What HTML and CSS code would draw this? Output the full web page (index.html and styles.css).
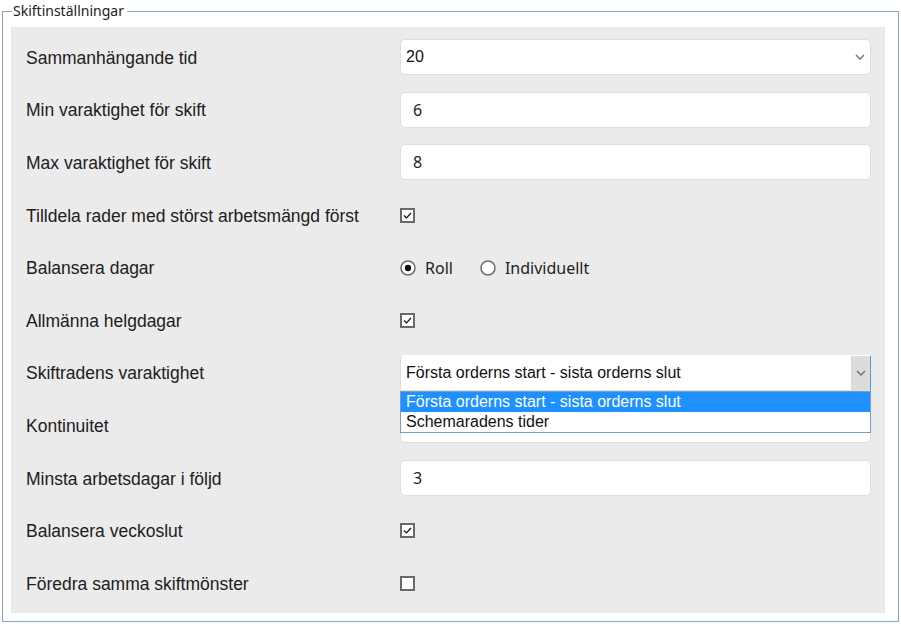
FILE: index.html
```html
<!DOCTYPE html>
<html lang="sv">
<head>
    <meta charset="UTF-8">
    <meta name="viewport" content="width=device-width, initial-scale=1.0">
    <title>Skiftinställningar</title>
    <link rel="stylesheet" href="styles.css">
</head>
<body>
    <fieldset class="settings">
        <legend>Skiftinställningar</legend>

        <div class="panel">
            <label class="row-label" for="contiguous">Sammanhängande tid</label>
            <div class="control">
                <div class="select">
                    <span class="select-value">20</span>
                    <svg class="chevron" width="10" height="6" viewBox="0 0 10 6"><path d="M1 1l4 4 4-4" fill="none" stroke="#6f6f6f" stroke-width="1.4"/></svg>
                </div>
            </div>

            <label class="row-label" for="minShift">Min varaktighet för skift</label>
            <div class="control"><input class="text-input" id="minShift" type="text" value="6"></div>

            <label class="row-label" for="maxShift">Max varaktighet för skift</label>
            <div class="control"><input class="text-input" id="maxShift" type="text" value="8"></div>

            <span class="row-label">Tilldela rader med störst arbetsmängd först</span>
            <div class="control">
                <svg class="check" width="15" height="15" viewBox="0 0 15 15"><rect x="1" y="1" width="13" height="13" fill="#fff" stroke="#6a6a6a" stroke-width="2"/><path d="M4 7.5l2.5 2.5 4.5-5" fill="none" stroke="#111" stroke-width="1.2"/></svg>
            </div>

            <span class="row-label">Balansera dagar</span>
            <div class="control radios">
                <span class="radio-item">
                    <svg class="radio" width="16" height="16" viewBox="0 0 16 16"><circle cx="8" cy="8" r="7" fill="#fff" stroke="#6a6a6a" stroke-width="1.5"/><circle cx="8" cy="8" r="3.2" fill="#111"/></svg>
                    Roll
                </span>
                <span class="radio-item">
                    <svg class="radio" width="16" height="16" viewBox="0 0 16 16"><circle cx="8" cy="8" r="7" fill="#fff" stroke="#6a6a6a" stroke-width="1.5"/></svg>
                    Individuellt
                </span>
            </div>

            <span class="row-label">Allmänna helgdagar</span>
            <div class="control">
                <svg class="check" width="15" height="15" viewBox="0 0 15 15"><rect x="1" y="1" width="13" height="13" fill="#fff" stroke="#6a6a6a" stroke-width="2"/><path d="M4 7.5l2.5 2.5 4.5-5" fill="none" stroke="#111" stroke-width="1.2"/></svg>
            </div>

            <span class="row-label">Skiftradens varaktighet</span>
            <div class="control">
                <div class="select is-open">
                    <span class="select-value">Första orderns start - sista orderns slut</span>
                    <span class="select-button">
                        <svg class="chevron" width="10" height="6" viewBox="0 0 10 6"><path d="M1 1l4 4 4-4" fill="none" stroke="#6f6f6f" stroke-width="1.4"/></svg>
                    </span>
                    <ul class="options">
                        <li class="option selected">Första orderns start - sista orderns slut</li>
                        <li class="option">Schemaradens tider</li>
                    </ul>
                </div>
            </div>

            <label class="row-label" for="continuity">Kontinuitet</label>
            <div class="control"><input class="text-input" id="continuity" type="text" value=""></div>

            <label class="row-label" for="minDays">Minsta arbetsdagar i följd</label>
            <div class="control"><input class="text-input" id="minDays" type="text" value="3"></div>

            <span class="row-label">Balansera veckoslut</span>
            <div class="control">
                <svg class="check" width="15" height="15" viewBox="0 0 15 15"><rect x="1" y="1" width="13" height="13" fill="#fff" stroke="#6a6a6a" stroke-width="2"/><path d="M4 7.5l2.5 2.5 4.5-5" fill="none" stroke="#111" stroke-width="1.2"/></svg>
            </div>

            <span class="row-label">Föredra samma skiftmönster</span>
            <div class="control">
                <svg class="check" width="15" height="15" viewBox="0 0 15 15"><rect x="1" y="1" width="13" height="13" fill="#fff" stroke="#6a6a6a" stroke-width="2"/></svg>
            </div>
        </div>
    </fieldset>
</body>
</html>
```

FILE: styles.css
```css
body {
    margin: 0;
    background-color: #ffffff;
    font-family: 'Liberation Sans', Arial, sans-serif;
    color: #222;
}
.settings {
    margin: 1px 2px 0 2px;
    width: 897px;
    height: 621px;
    box-sizing: border-box;
    border: 1px solid #86a7ca;
    padding: 6px 13px 8px 8px;
}
.settings legend {
    font-family: 'Noto Sans', 'Open Sans', sans-serif;
    font-size: 14px;
    line-height: 20px;
    color: #222;
    padding: 0 3px 0 1px;
    margin-left: 1px;
}
.panel {
    background-color: #ebebeb;
    height: 100%;
    box-sizing: border-box;
    padding: 4px 14px 0 15px;
    display: grid;
    grid-template-columns: 374px 471px;
    grid-auto-rows: 52.6px;
    align-items: center;
}
.row-label {
    font-size: 17.5px;
    color: #202020;
    padding-top: 2px;
}
.control {
    display: flex;
    align-items: center;
    height: 36px;
}
.text-input {
    width: 100%;
    height: 36px;
    box-sizing: border-box;
    border: 1px solid #dedede;
    border-radius: 5px;
    background-color: #fff;
    padding: 0 12px;
    font-family: 'Noto Sans', 'Open Sans', sans-serif;
    font-size: 16px;
    color: #222;
    outline: none;
}
.select {
    position: relative;
    width: 100%;
    height: 36px;
    box-sizing: border-box;
    border: 1px solid #dedede;
    border-radius: 5px;
    background-color: #fff;
    display: flex;
    align-items: center;
    padding-left: 5px;
    font-size: 16px;
    color: #111;
}
.select-value {
    flex: 1;
}
.select .chevron {
    margin-right: 5px;
}
.select-button {
    align-self: stretch;
    width: 18px;
    background-color: #dcdcdc;
    border-left: 1px solid #d8d8d8;
    display: flex;
    align-items: center;
    justify-content: center;
}
.select-button .chevron {
    margin: 0;
}
.select.is-open {
    border-top-color: #fff;
    border-radius: 5px 1px 0 0;
    border-right: 1px solid #4a9de0;
}
.options {
    position: absolute;
    top: 35px;
    left: -1px;
    right: -1px;
    margin: 0;
    padding: 0;
    list-style: none;
    background-color: #fff;
    border: 1px solid #7a9bc7;
    z-index: 2;
}
.option {
    height: 20px;
    line-height: 20px;
    padding-left: 5px;
    font-size: 16px;
    color: #111;
}
.option.selected {
    background-color: #1e90ff;
    color: #fff;
}
.radios {
    font-family: 'Noto Sans', 'Open Sans', sans-serif;
    font-size: 16px;
    color: #222;
    gap: 27px;
}
.radio-item {
    display: flex;
    align-items: center;
    gap: 9px;
}
```
